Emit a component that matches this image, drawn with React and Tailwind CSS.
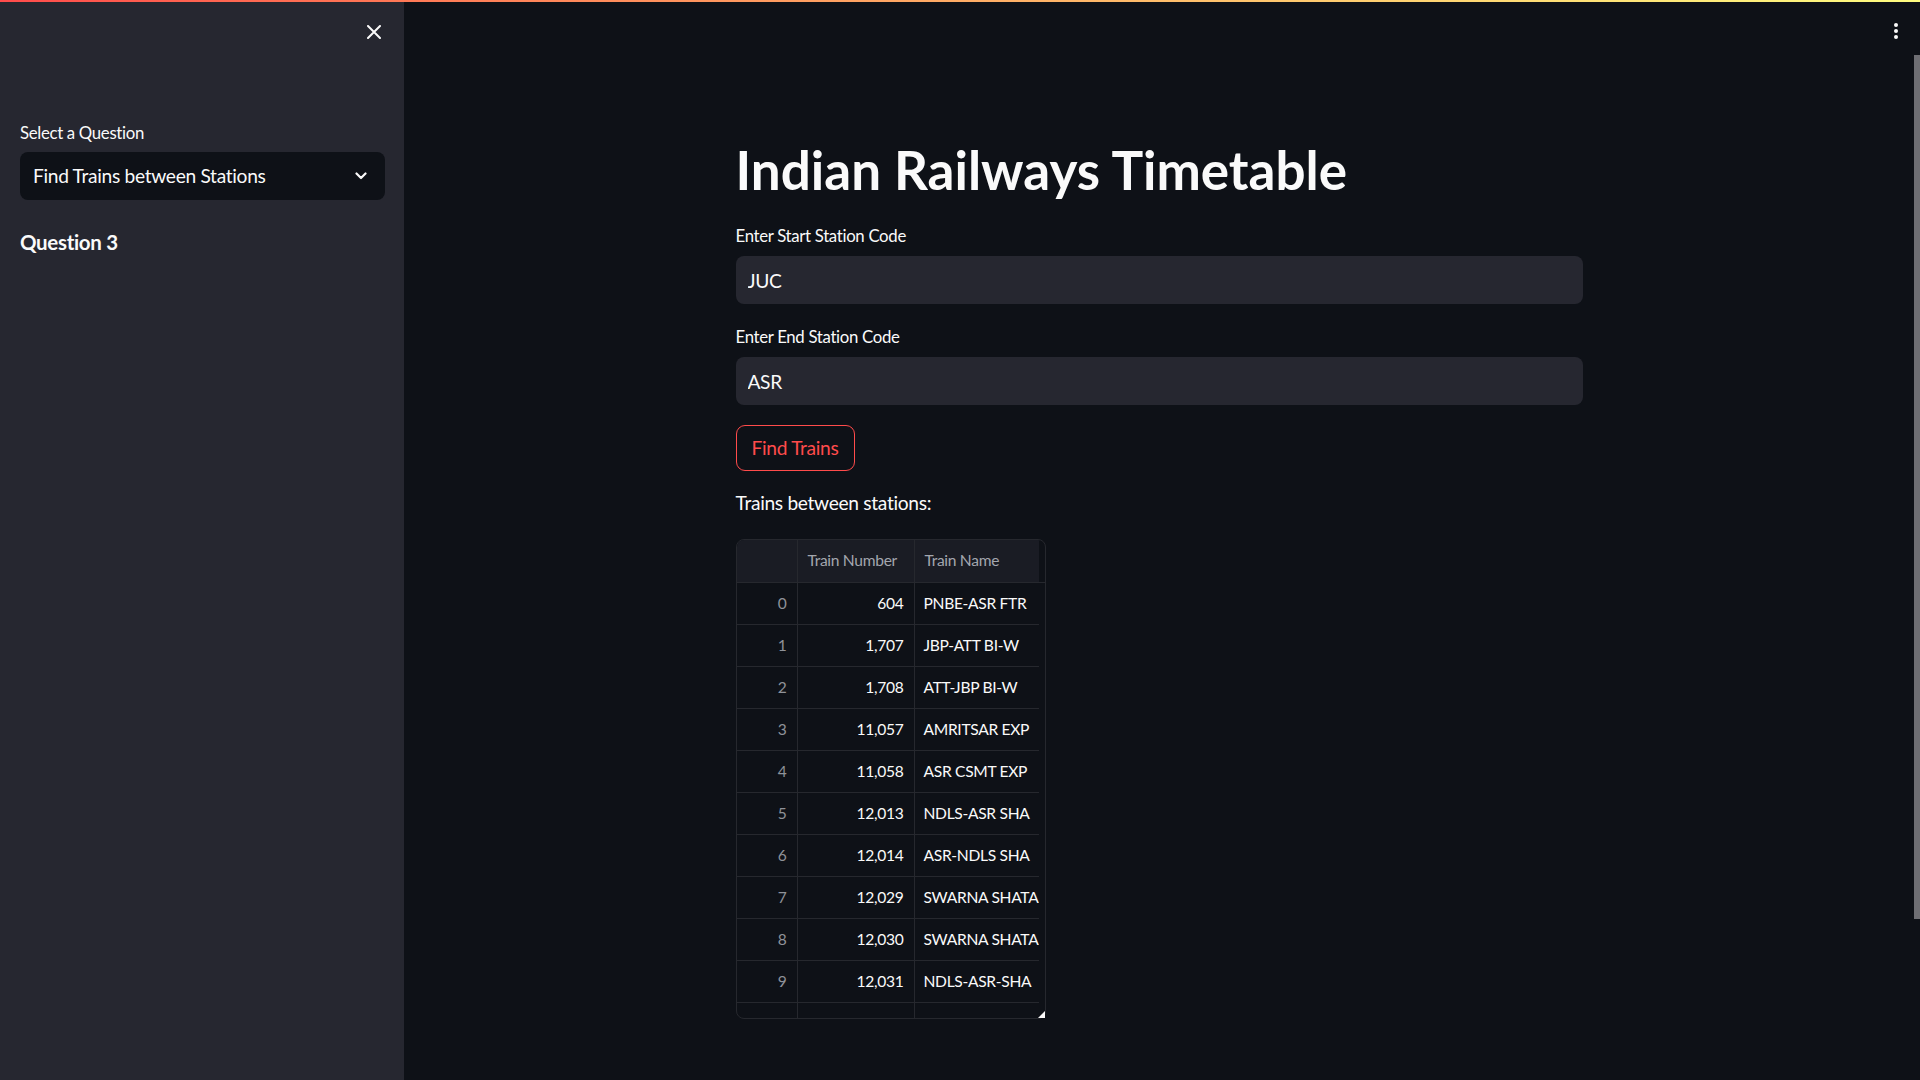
import { useState } from 'react'

const rows = [
  [0, '604', 'PNBE-ASR FTR'],
  [1, '1,707', 'JBP-ATT BI-W'],
  [2, '1,708', 'ATT-JBP BI-W'],
  [3, '11,057', 'AMRITSAR EXP'],
  [4, '11,058', 'ASR CSMT EXP'],
  [5, '12,013', 'NDLS-ASR SHA'],
  [6, '12,014', 'ASR-NDLS SHA'],
  [7, '12,029', 'SWARNA SHATA'],
  [8, '12,030', 'SWARNA SHATA'],
  [9, '12,031', 'NDLS-ASR-SHA'],
  [10, '', ''],
]

function Field({ label, value, onChange }) {
  return (
    <div className="flex flex-col">
      <label className="text-[16.8px] text-[#fafafa] leading-[24px] mb-[8px]">{label}</label>
      <input
        className="h-[48px] w-full rounded-[8px] bg-[#262730] px-[12px] text-[19.2px] tracking-[-0.02em] text-[#fafafa] outline-none"
        value={value}
        onChange={(e) => onChange(e.target.value)}
      />
    </div>
  )
}

function DataTable() {
  return (
    <div className="w-[310px] h-[480px] rounded-[8px] border border-[#26282e] overflow-hidden text-[15.6px] tracking-[-0.02em]">
      <div className="flex h-[43px] border-b border-[#26282e]">
        <div className="w-[61px] bg-[#1a1c24] border-r border-[#26282e]" />
        <div className="w-[117px] bg-[#1a1c24] border-r border-[#26282e] flex items-center pl-[10px] text-[#a3a6ae] whitespace-nowrap">Train Number</div>
        <div className="w-[124px] bg-[#1a1c24] flex items-center pl-[10px] text-[#a3a6ae] whitespace-nowrap">Train Name</div>
      </div>
      {rows.map(([i, num, name]) => (
        <div key={i} className="flex h-[42px]">
          <div className="w-[61px] border-r border-b border-[#26282e] flex items-center justify-end pr-[10px] text-[#8f9299]">{num ? i : ''}</div>
          <div className="w-[117px] border-r border-b border-[#26282e] flex items-center justify-end pr-[10px] text-[#fafafa]">{num}</div>
          <div className="w-[124px] border-b border-[#26282e] flex items-center pl-[9px] text-[#fafafa] whitespace-nowrap overflow-hidden">{name}</div>
        </div>
      ))}
    </div>
  )
}

export default function App() {
  const [start, setStart] = useState('JUC')
  const [end, setEnd] = useState('ASR')

  return (
    <div className="relative flex h-screen w-full overflow-hidden bg-[#0e1117] tracking-[-0.02em]" style={{ fontFamily: 'Lato, "Noto Sans", sans-serif' }}>
      <div className="absolute top-0 left-0 right-0 h-[2px] bg-gradient-to-r from-[#ff4b4b] to-[#fffd80] z-10" />

      <aside className="w-[404px] shrink-0 bg-[#262730] px-[20px]">
        <div className="flex justify-end pt-[24px] pr-[2px]">
          <button className="w-[16px] h-[16px] flex items-center justify-center">
            <svg width="14" height="14" viewBox="0 0 14 14" stroke="#fafafa" strokeWidth="2" strokeLinecap="round">
              <path d="M1 1l12 12M13 1L1 13" />
            </svg>
          </button>
        </div>
        <div className="mt-[81px] text-[16.8px] leading-[24px] text-[#fafafa]">Select a Question</div>
        <div className="mt-[7px] h-[48px] w-[365px] rounded-[8px] bg-[#0e1117] flex items-center justify-between pl-[13px] pr-[18px]">
          <span className="text-[19.2px] text-[#fafafa]">Find Trains between Stations</span>
          <svg width="12" height="8" viewBox="0 0 12 8" fill="none" stroke="#fafafa" strokeWidth="2.2" strokeLinecap="round" strokeLinejoin="round">
            <path d="M1.5 1.5L6 6l4.5-4.5" />
          </svg>
        </div>
        <h3 className="mt-[27px] text-[20.5px] font-bold text-[#fafafa] leading-[30px]">Question 3</h3>
      </aside>

      <main className="relative flex-1 flex justify-center pr-[6px]">
        <div className="absolute top-[23px] right-[22px] flex flex-col gap-[2px]">
          <span className="w-[4px] h-[4px] rounded-full bg-[#fafafa]" />
          <span className="w-[4px] h-[4px] rounded-full bg-[#fafafa]" />
          <span className="w-[4px] h-[4px] rounded-full bg-[#fafafa]" />
        </div>
        <div className="absolute right-0 top-[55px] h-[864px] w-[6px] bg-[#6e6e73]" />

        <div className="w-[847px] pt-[138px]">
          <h1 className="text-[53px] font-bold leading-[64px] text-[#fafafa] tracking-normal">Indian Railways Timetable</h1>
          <div className="mt-[22px] flex flex-col gap-[21px]">
            <Field label="Enter Start Station Code" value={start} onChange={setStart} />
            <Field label="Enter End Station Code" value={end} onChange={setEnd} />
          </div>
          <button className="mt-[20px] h-[46px] w-[119px] rounded-[9px] border border-[#ff4b4b] text-[19.2px] text-[#ff4b4b]">
            Find Trains
          </button>
          <p className="mt-[18px] text-[19.2px] leading-[28px] text-[#fafafa]">Trains between stations:</p>
          <div className="relative mt-[22px] w-[310px]">
            <DataTable />
            <div className="absolute right-[1px] bottom-[1px] w-0 h-0 border-l-[7px] border-l-transparent border-b-[7px] border-b-[#fafafa]" />
          </div>
        </div>
      </main>
    </div>
  )
}
